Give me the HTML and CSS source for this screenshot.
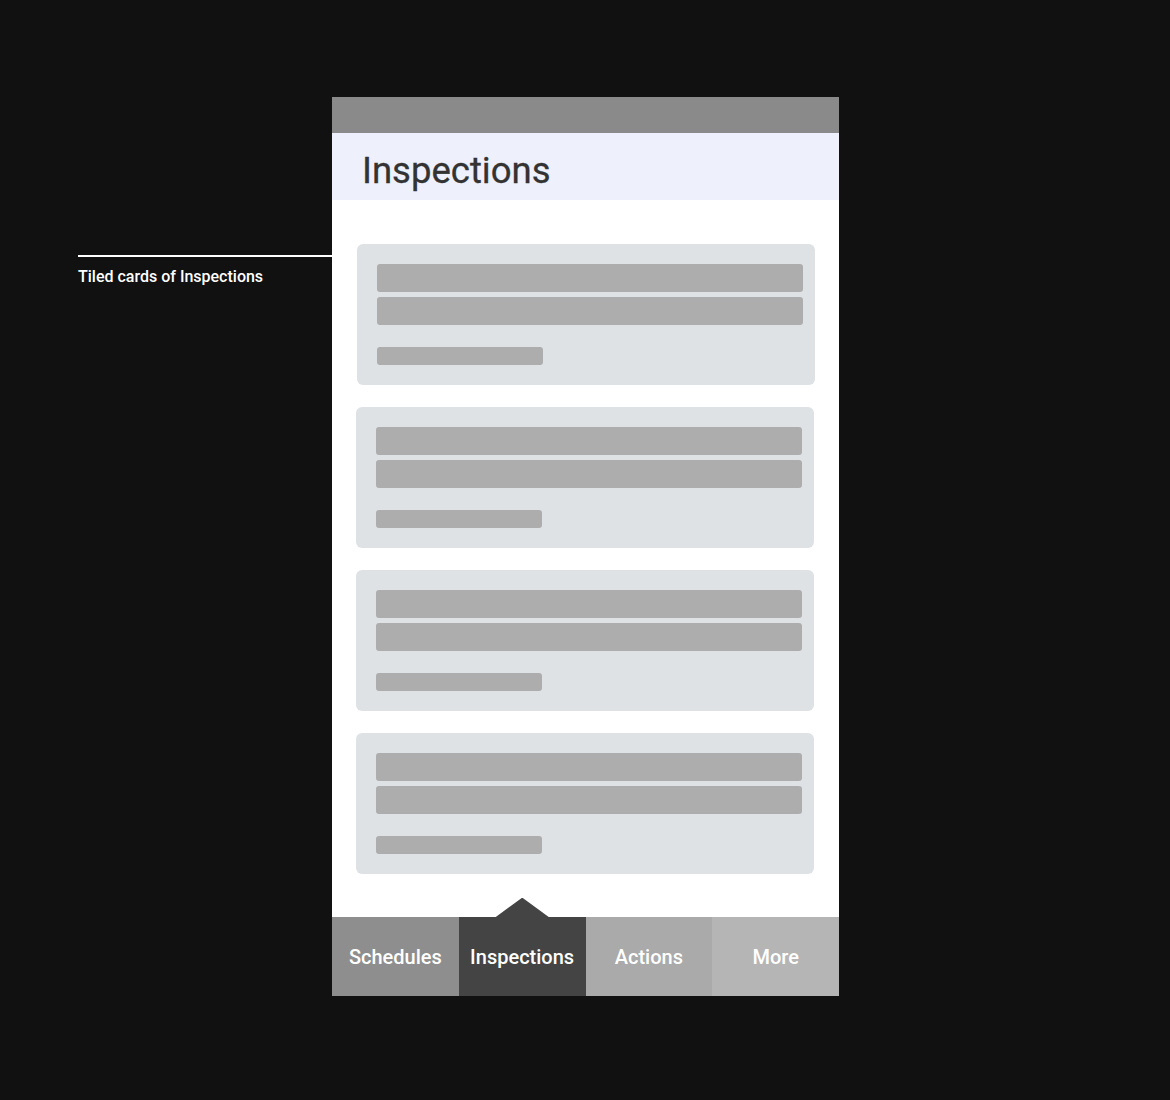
FILE: index.html
```html
<!DOCTYPE html>
<html>
<head>
<meta charset="utf-8">
<link rel="stylesheet" href="styles.css">
</head>
<body>
<div class="canvas">
  <div class="annotation">
    <div class="anno-line"></div>
    <div class="anno-text">Tiled cards of Inspections</div>
  </div>
  <div class="phone">
    <div class="status"></div>
    <div class="header"><h1 class="title">Inspections</h1></div>
    <div class="content">
      <div class="card first"><div class="bar"></div><div class="bar"></div><div class="bar short"></div></div>
      <div class="card"><div class="bar"></div><div class="bar"></div><div class="bar short"></div></div>
      <div class="card"><div class="bar"></div><div class="bar"></div><div class="bar short"></div></div>
      <div class="card"><div class="bar"></div><div class="bar"></div><div class="bar short"></div></div>
    </div>
    <div class="nav">
      <div class="tab t1">Schedules</div>
      <div class="tab t2 active">Inspections</div>
      <div class="tab t3">Actions</div>
      <div class="tab t4">More</div>
    </div>
  </div>
</div>
</body>
</html>
```

FILE: styles.css
```css
html, body {
  margin: 0;
  padding: 0;
  background: #111111;
  font-family: Roboto, "Liberation Sans", sans-serif;
}
.canvas {
  display: flex;
  align-items: flex-start;
  padding: 97px 0 0 78px;
}
.annotation {
  width: 254px;
  padding-top: 158px;
}
.anno-line {
  height: 2px;
  background: #ffffff;
}
.anno-text {
  color: #ffffff;
  font-size: 16px;
  font-weight: 500;
  margin-top: 10px;
  line-height: 19px;
}
.phone {
  width: 507px;
  display: flex;
  flex-direction: column;
  background: #ffffff;
}
.status {
  height: 36px;
  background: #8a8a8a;
}
.header {
  height: 67px;
  background: #eef0fb;
  padding-left: 30px;
  box-sizing: border-box;
}
.title {
  margin: 0;
  font-size: 36.5px;
  font-weight: 400;
  color: #333333;
  line-height: 36px;
  padding-top: 20px;
  -webkit-text-stroke: 0.3px #333333;
}
.content {
  display: flex;
  flex-direction: column;
  gap: 22px;
  padding: 44px 25px 43px 24px;
}
.card {
  height: 141px;
  box-sizing: border-box;
  background: #dfe2e5;
  border-radius: 6px;
  padding: 20px 12px 20px 20px;
  display: flex;
  flex-direction: column;
}
.card.first {
  margin-left: 1px;
  margin-right: -1px;
}
.bar {
  height: 28px;
  background: #adadad;
  border-radius: 3px;
}
.bar + .bar {
  margin-top: 5px;
}
.bar.short {
  height: 18px;
  width: 166px;
  margin-top: 22px;
}
.nav {
  display: flex;
  height: 79px;
  position: relative;
}
.tab {
  flex: 1;
  display: flex;
  align-items: center;
  justify-content: center;
  color: #ffffff;
  font-size: 20px;
  font-weight: 500;
  position: relative;
}
.t1 { background: #8e8e8e; }
.t2 { background: #444444; }
.t3 { background: #aaaaaa; }
.t4 { background: #b5b5b5; }
.tab.active::before {
  content: "";
  position: absolute;
  left: 37px;
  top: -19px;
  width: 53px;
  height: 19px;
  background: #444444;
  clip-path: polygon(0 100%, 49% 0, 51% 0, 100% 100%);
}
```
